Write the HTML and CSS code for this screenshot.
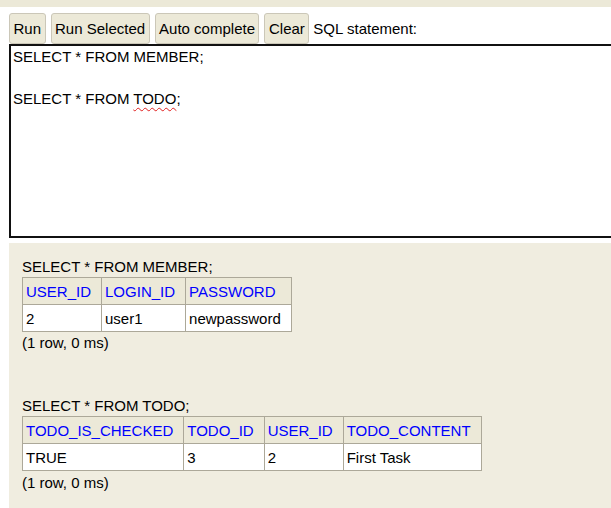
FILE: index.html
```html
<!DOCTYPE html>
<html>
<head>
<meta charset="utf-8">
<link rel="stylesheet" href="styles.css">
</head>
<body>
<div class="topbar"></div>
<div class="toolbar">
  <button class="btn">Run</button>
  <button class="btn">Run Selected</button>
  <button class="btn">Auto complete</button>
  <button class="btn">Clear</button>
  <span class="label">SQL statement:</span>
</div>
<div class="editor">
  <div class="line">SELECT * FROM MEMBER;</div>
  <div class="line">&nbsp;</div>
  <div class="line">SELECT * FROM <span class="spell">TODO</span>;</div>
</div>
<div class="result">
  <div class="query">SELECT * FROM MEMBER;</div>
  <table class="grid">
    <tr><th>USER_ID</th><th>LOGIN_ID</th><th>PASSWORD</th></tr>
    <tr><td>2</td><td>user1</td><td>newpassword</td></tr>
  </table>
  <div class="info">(1 row, 0 ms)</div>
  <div class="query second">SELECT * FROM TODO;</div>
  <table class="grid">
    <tr><th>TODO_IS_CHECKED</th><th>TODO_ID</th><th>USER_ID</th><th>TODO_CONTENT</th></tr>
    <tr><td>TRUE</td><td>3</td><td>2</td><td>First Task</td></tr>
  </table>
  <div class="info last">(1 row, 0 ms)</div>
</div>
</body>
</html>
```

FILE: styles.css
```css
html, body {
  margin: 0;
  padding: 0;
  background: #ffffff;
  overflow: hidden;
}
body {
  font-family: "Liberation Sans", Arial, sans-serif;
  font-size: 15px;
  color: #000;
  width: 700px;
  height: 508px;
}
.topbar {
  height: 7px;
  background: #ece9d8;
}
.toolbar {
  display: flex;
  align-items: center;
  gap: 5px;
  padding: 6px 0 0 9px;
  height: 31px;
}
.btn {
  box-sizing: border-box;
  height: 31px;
  margin: 0;
  padding: 0 3.5px;
  font-family: "Liberation Sans", Arial, sans-serif;
  font-size: 15px;
  color: #000;
  background: #ece9d8;
  border: 1px solid #cbc7b8;
  border-radius: 3px;
}
.label {
  margin-left: -1px;
  font-size: 15px;
}
.editor {
  box-sizing: border-box;
  margin-left: 9px;
  height: 194px;
  border: 2px solid #111;
  border-right: none;
  padding: 0 2px;
  line-height: 21px;
  background: #fff;
}
.spell {
  text-decoration: underline wavy #e02020;
  text-decoration-thickness: 1px;
  text-underline-offset: 3px;
}
.result {
  margin: 5px 0 0 9px;
  height: 260px;
  background: #f0ede0;
  padding: 14px 0 0 13px;
}
.query {
  line-height: 20px;
}
.query.second {
  margin-top: 43px;
}
.grid {
  border-collapse: collapse;
  background: #fff;
}
.grid th, .grid td {
  border: 1px solid #aca899;
  text-align: left;
  font-weight: normal;
  padding: 0 10px 0 3px;
  white-space: nowrap;
}
.grid th {
  background: #ece9d8;
  color: #0000ff;
  height: 26px;
}
.grid td {
  height: 26px;
}
.info {
  line-height: 20px;
  margin-top: 1px;
}
.info.last {
  margin-top: 2px;
}
```
